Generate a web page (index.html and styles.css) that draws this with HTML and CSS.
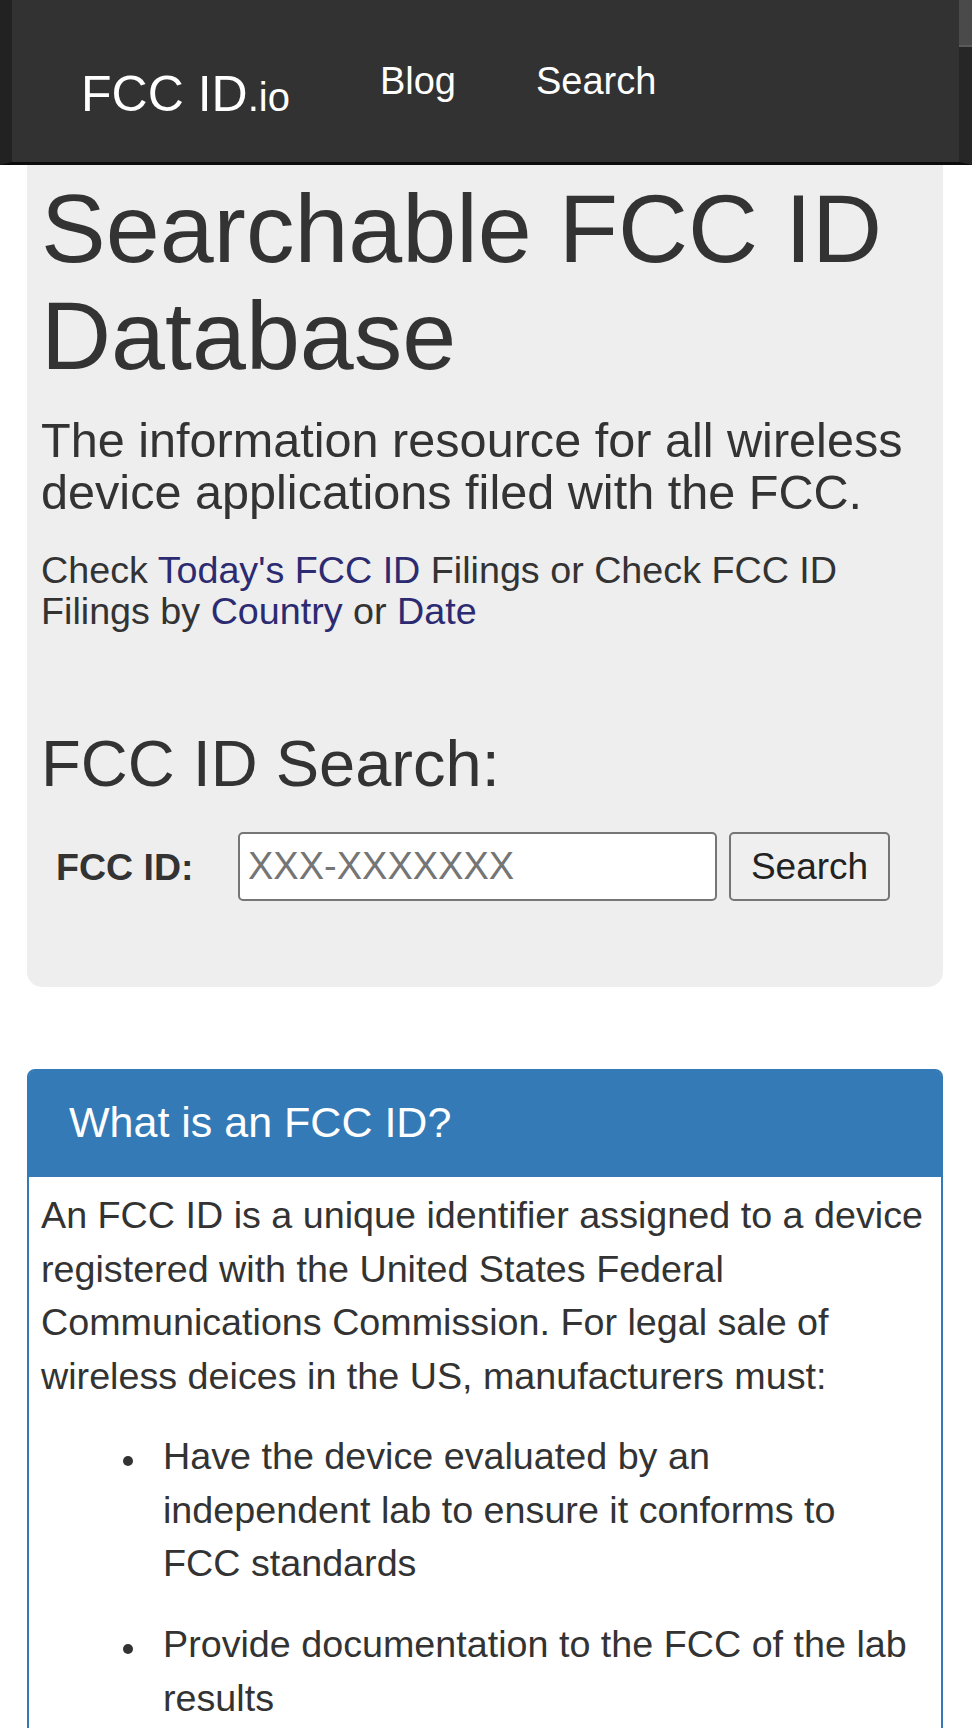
FILE: index.html
```html
<!DOCTYPE html>
<html lang="en">
<head>
<meta charset="utf-8">
<title>FCC ID.io - Searchable FCC ID Database</title>
<link rel="stylesheet" href="styles.css">
</head>
<body>
<nav class="navbar">
  <a class="brand" href="#">FCC ID<span class="brand-io">.io</span></a>
  <ul class="nav-links">
    <li><a href="#">Blog</a></li>
    <li><a href="#">Search</a></li>
  </ul>
</nav>
<main class="container">
  <section class="jumbotron">
    <h1 class="hero-title">Searchable FCC ID Database</h1>
    <p class="hero-lead">The information resource for all wireless device applications filed with the FCC.</p>
    <p class="hero-links">Check <a href="#">Today's FCC ID</a> Filings or Check FCC ID Filings by <a href="#">Country</a> or <a href="#">Date</a></p>
    <h2 class="search-title">FCC ID Search:</h2>
    <form class="search-form">
      <label class="search-label" for="fccid">FCC ID:</label>
      <input class="search-input" id="fccid" type="text" placeholder="XXX-XXXXXXX">
      <button class="search-button" type="button">Search</button>
    </form>
  </section>
  <section class="panel">
    <h3 class="panel-heading">What is an FCC ID?</h3>
    <div class="panel-body">
      <p class="panel-text">An FCC ID is a unique identifier assigned to a device registered with the United States Federal Communications Commission. For legal sale of wireless deices in the US, manufacturers must:</p>
      <ul class="panel-list">
        <li>Have the device evaluated by an independent lab to ensure it conforms to FCC standards</li>
        <li>Provide documentation to the FCC of the lab results</li>
      </ul>
    </div>
  </section>
</main>
</body>
</html>
```
FILE: styles.css
```css
* {
  box-sizing: border-box;
}

html, body {
  margin: 0;
  padding: 0;
  background: #fff;
}

body {
  font-family: "Liberation Sans", Arial, Helvetica, sans-serif;
  color: #333;
}

a {
  text-decoration: none;
}

/* Navbar */
.navbar {
  position: relative;
  display: flex;
  align-items: flex-start;
  height: 165px;
  background: #323232;
  border-left: 12px solid #222;
  border-right: 13px solid #262626;
  border-bottom: 3px solid #0c0c0c;
  padding-left: 69px;
}

.navbar::after {
  content: "";
  position: absolute;
  top: 0;
  right: -13px;
  width: 13px;
  height: 45px;
  background: #4a4a4a;
  border-bottom: 2px solid #5a5a5a;
}

.brand {
  padding-top: 69px;
  font-size: 50px;
  line-height: 50px;
  color: #fff;
  white-space: nowrap;
}

.brand-io {
  font-size: 40px;
}

.nav-links {
  display: flex;
  list-style: none;
  margin: 0 0 0 50px;
  padding: 0;
}

.nav-links a {
  display: block;
  padding: 60px 40px 0 40px;
  font-size: 38px;
  line-height: 42px;
  color: #fff;
}

/* Container */
.container {
  padding: 0 29px 0 27px;
}

/* Jumbotron */
.jumbotron {
  background: #eee;
  border-radius: 0 0 15px 15px;
  padding: 10px 14px 86px 14px;
}

.hero-title {
  margin: 0;
  font-size: 97px;
  line-height: 107px;
  font-weight: normal;
  color: #333;
}

.hero-lead {
  margin: 25px 0 0 0;
  font-size: 48.6px;
  line-height: 52px;
}

.hero-links {
  margin: 32px 0 0 0;
  font-size: 37.7px;
  line-height: 40.5px;
}

.hero-links a {
  color: #2c2b72;
}

.search-title {
  margin: 97px 0 0 0;
  font-size: 65px;
  line-height: 71px;
  font-weight: normal;
}

.search-form {
  display: flex;
  align-items: center;
  margin-top: 33px;
}

.search-label {
  margin-left: 15px;
  width: 182px;
  font-size: 37.5px;
  font-weight: bold;
  line-height: 42px;
  color: #333;
}

.search-input {
  width: 479px;
  height: 69px;
  border: 2px solid #767676;
  border-radius: 5px;
  background: #fff;
  padding: 0 8px;
  font-family: "Liberation Sans", Arial, sans-serif;
  font-size: 38px;
  color: #333;
}

.search-input::placeholder {
  color: #757575;
}

.search-button {
  margin-left: 12px;
  width: 161px;
  height: 69px;
  border: 2px solid #767676;
  border-radius: 5px;
  background: #efefef;
  padding: 0;
  font-family: "Liberation Sans", Arial, sans-serif;
  font-size: 37px;
  color: #222;
}

/* Panel */
.panel {
  margin-top: 82px;
  border: 2px solid #337ab7;
  border-radius: 8px 8px 0 0;
  background: #fff;
}

.panel-heading {
  margin: 0;
  background: #337ab7;
  color: #fff;
  font-size: 43px;
  line-height: 48px;
  font-weight: normal;
  padding: 27px 40px 31px 40px;
  border-radius: 5px 5px 0 0;
}

.panel-body {
  padding: 12px 12px 60px 12px;
  font-size: 37.7px;
  line-height: 53.57px;
}

.panel-text {
  margin: 0 0 27px 0;
}

.panel-list {
  list-style: none;
  margin: 0;
  padding: 0 14px 0 122px;
}

.panel-list li {
  position: relative;
  margin-bottom: 27px;
}

.panel-list li::before {
  content: "";
  position: absolute;
  left: -40px;
  top: 26px;
  width: 10px;
  height: 10px;
  border-radius: 50%;
  background: #333;
}
```
